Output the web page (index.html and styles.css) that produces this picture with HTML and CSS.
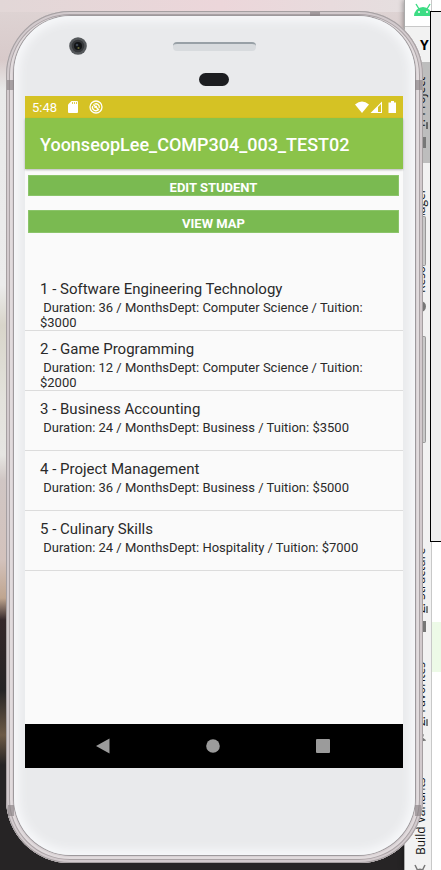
FILE: index.html
```html
<!DOCTYPE html>
<html lang="en">
<head>
<meta charset="utf-8">
<meta name="viewport" content="width=device-width, initial-scale=1">
<title>YoonseopLee_COMP304_003_TEST02</title>
<link rel="stylesheet" href="styles.css">
</head>
<body>
<aside class="ide">
  <div class="ide-logo">
    <svg width="20" height="13" viewBox="0 0 20 13"><path d="M1 13a9 9 0 0 1 18 0z" fill="#3ddc84"/><path d="M3 1l3 5M17 1l-3 5" stroke="#3ddc84" stroke-width="1.4"/><circle cx="6" cy="9" r="1" fill="#fff"/><circle cx="14" cy="9" r="1" fill="#fff"/></svg>
  </div>
  <div class="ide-crumb">Y</div>
  <div class="tab tab-active"><i class="tab-icon"></i><span><u>1</u>: Project</span></div>
  <div class="tab tab-resource"><i class="tab-icon tab-dot"></i><span>Resource Manager</span></div>
  <div class="tab tab-structure"><i class="tab-icon"></i><span><u>Z</u>: Structure</span></div>
  <div class="tab tab-favorites"><i class="tab-icon tab-star"></i><span><u>2</u>: Favorites</span></div>
  <div class="tab tab-build"><svg width="14" height="12" viewBox="0 0 14 12"><g transform="rotate(180 7 6)"><path d="M1 12a6 6.500 0 0 1 12 0z" fill="#777"/><path d="M2 2l2.500 5M12 2L9.500 7" stroke="#777" stroke-width="1.500"/></g></svg><span>Build Variants</span></div>
</aside>
<div class="editor"><div class="editor-line"></div></div>
<div class="dialog"></div>

<main class="phone">
  <i class="seam seam-top"></i><i class="seam seam-tl"></i><i class="seam seam-tr"></i><i class="seam seam-bl"></i><i class="seam seam-br"></i>
  <i class="side-key power"></i><i class="side-key volume"></i>
  <div class="face">
    <div class="forehead">
      <svg class="camera" width="18" height="18" viewBox="0 0 18 18"><circle cx="9" cy="9" r="8.8" fill="#55585b"/><circle cx="9" cy="9" r="6.3" fill="#35373a"/><circle cx="9" cy="9" r="4" fill="#111315"/><circle cx="8" cy="8" r="1.3" fill="#3c4450"/><circle cx="9.5" cy="11" r="1.1" fill="#686737"/></svg>
      <div class="speaker"></div>
      <div class="sensor"></div>
    </div>
    <section class="screen">
      <div class="status">
        <span>5:48</span>
        <svg width="10" height="12" viewBox="0 0 10 12"><path d="M3.500 0H9a1 1 0 0 1 1 1v10a1 1 0 0 1-1 1H1a1 1 0 0 1-1-1V3.500z" fill="#fff"/><path d="M4.500 1v2M6.500 1v2M8.500 1v2" stroke="#d5c224" stroke-width=".8"/></svg>
        <svg width="14" height="14" viewBox="0 0 14 14" fill="none" stroke="#fff"><circle cx="7" cy="7" r="6" stroke-width="1.300"/><path d="M4.300 4.500L10 10M9 9.700A3.300 3.300 0 0 1 3.700 6M5.500 4.200A3.300 3.300 0 0 1 10.200 8M5.800 7.800Q6 6.200 8 6.500" stroke-width="1.300"/></svg>
        <svg class="signals" width="42" height="13" viewBox="0 0 42 13"><path d="M0 3.500Q7-2.500 14 3.500L7 12z" fill="#fff"/><path d="M27 .5V12H15.500z" fill="#fff"/><path d="M23 6v5h3V3z" fill="#d5c224"/><path d="M34 1.500h2V0h3v1.500h2V12h-7.500V1.500z" fill="#fff"/></svg>
      </div>
      <header class="appbar"><h1>YoonseopLee_COMP304_003_TEST02</h1></header>
      <div class="actions">
        <button type="button">EDIT STUDENT</button>
        <button type="button">VIEW MAP</button>
      </div>
      <ul class="programs">
        <li><h2>1 - Software Engineering Technology</h2><p> Duration: 36 / MonthsDept: Computer Science / Tuition: $3000</p></li>
        <li><h2>2 - Game Programming</h2><p> Duration: 12 / MonthsDept: Computer Science / Tuition: $2000</p></li>
        <li><h2>3 - Business Accounting</h2><p> Duration: 24 / MonthsDept: Business / Tuition: $3500</p></li>
        <li><h2>4 - Project Management</h2><p> Duration: 36 / MonthsDept: Business / Tuition: $5000</p></li>
        <li><h2>5 - Culinary Skills</h2><p> Duration: 24 / MonthsDept: Hospitality / Tuition: $7000</p></li>
      </ul>
      <nav class="navbar">
        <button type="button" aria-label="Back"><svg width="14" height="16" viewBox="0 0 14 16"><path d="M0 8L13.500 .5v15z"/></svg></button>
        <button type="button" aria-label="Home"><svg width="14" height="14" viewBox="0 0 14 14"><circle cx="7" cy="7" r="6.800"/></svg></button>
        <button type="button" aria-label="Recent apps"><svg width="14" height="14" viewBox="0 0 14 14"><rect width="14" height="14" rx="1"/></svg></button>
      </nav>
    </section>
  </div>
</main>
</body>
</html>
```
FILE: styles.css
```css
* { box-sizing: border-box; }
html { height: 100%; }
body {
  margin: 0;
  min-height: 100%;
  display: flex;
  position: relative;
  overflow: hidden;
  font-family: Roboto, "Liberation Sans", sans-serif;
  background:
    linear-gradient(90deg, #e2d7d7, #ecd6da 50%, #e4e0e0) top / 100% 12px no-repeat,
    linear-gradient(#dfd5d5 0, #d8caca 60px, #e9e9e9 90px, #ececec 285px, #d8d5ca 325px, #e3e2dc 400px, #e6e5e2 455px, #d0c6c4 480px, #d3c2bc 560px, #bfa58f 598px, #35282b 620px, #262425 690px, #6c5946 735px, #262425 765px, #262425 100%);
}
h1, h2, p, ul { margin: 0; padding: 0; }
button { border: 0; padding: 0; font-family: inherit; }

/* Windows behind the phone */
.ide {
  position: absolute;
  top: 0;
  bottom: 0;
  right: 9px;
  width: 28px;
  display: flex;
  flex-direction: column;
  background: #f2f2f2;
  border-left: 1px solid #aaa;
  border-right: 1px solid #c8c8c8;
  box-shadow: -1px 0 5px #0005;
}
.ide-logo {
  flex: none;
  height: 27px;
  padding: 3px 0 0 8px;
  background: #fff;
  border-bottom: 1px solid #c8c8c8;
}
.ide-logo svg { display: block; }
.ide-crumb {
  flex: none;
  height: 35px;
  padding-left: 15px;
  font: bold 14px/35px "Open Sans", sans-serif;
}
.tab {
  flex: none;
  display: flex;
  align-items: center;
  gap: 8px;
  padding: 15px 5px 0 0;
  writing-mode: vertical-rl;
  transform: rotate(180deg);
  white-space: nowrap;
  font: 12px/16px "Open Sans", sans-serif;
  color: #111;
}
.tab-active { height: 101px; background: #bdbdbd; }
.tab-resource { height: 164px; }
.tab-structure { height: 120px; margin-top: 200px; }
.tab-favorites { height: 113px; }
.tab-build { height: 115px; padding-top: 0; }
.tab-icon { width: 12px; height: 11px; background: #777; }
.tab-dot { border-radius: 6px; }
.tab-star { clip-path: polygon(50% 0, 65% 35%, 100% 40%, 70% 65%, 80% 100%, 50% 80%, 20% 100%, 30% 65%, 0 40%, 35% 35%); }
.editor {
  position: absolute;
  top: 0;
  bottom: 0;
  right: 0;
  width: 9px;
  background: #fff;
}
.editor-line { height: 50px; margin-top: 622px; background: #edfae7; }
.dialog {
  position: absolute;
  top: 11px;
  right: 0;
  width: 11px;
  height: 531px;
  background: #efefef;
  border: 1px solid #000;
  border-right: 0;
}

/* Handset */
.phone {
  position: relative;
  flex: 1;
  display: flex;
  margin: 11px 18px 7px 6px;
  padding: 5px 8px 8px;
  border-radius: 64px;
  background: #d9d1d4;
  box-shadow:
    inset 0 0 0 1px #a59fa1,
    inset 0 0 0 3px #d2cacd,
    inset 0 0 0 4px #aaa2a5,
    inset 0 0 0 6px #e1dbdd;
}
.face {
  flex: 1;
  min-width: 0;
  display: flex;
  flex-direction: column;
  padding: 0 12px 87px 11px;
  border-radius: 57px;
  background: #e9eaec;
  box-shadow: 0 0 0 1px #9d999c, inset 0 0 10px 5px #f7f8fa;
}
.forehead {
  position: relative;
  flex: none;
  height: 80px;
  display: flex;
  flex-direction: column;
  align-items: center;
  gap: 22px;
  padding-top: 26px;
}
.camera { position: absolute; top: 21px; left: 44px; }
.speaker {
  width: 83px;
  height: 9px;
  border-radius: 4px;
  border-top: 2px solid #98a0a6;
  background: #d8dbde;
}
.sensor { width: 30px; height: 13px; border-radius: 7px; background: #1c1d20; }
.seam { position: absolute; background: #8a8285aa; }
.seam-top { top: 1px; right: 103px; width: 10px; height: 4px; }
.seam-tl, .seam-tr { top: 69px; width: 7px; height: 10px; }
.seam-bl, .seam-br { bottom: 47px; width: 6px; height: 11px; }
.seam-tl { left: 1px; }
.seam-tr { right: 1px; }
.seam-bl { left: 2px; }
.seam-br { right: 2px; }
.side-key {
  position: absolute;
  right: -3px;
  width: 3px;
  border-radius: 0 2px 2px 0;
  background: #c9c9c9;
  border: 1px solid #999;
  border-left: 0;
}
.power { top: 205px; height: 50px; }
.volume { top: 325px; height: 107px; }

/* Screen */
.screen {
  flex: 1;
  display: flex;
  flex-direction: column;
  background: #fafafa;
}
.status {
  flex: none;
  height: 22px;
  display: flex;
  align-items: center;
  gap: 11px;
  padding: 0 6px 0 7px;
  background: #d5c224;
  color: #fff;
  font-size: 13px;
}
.signals { margin-left: auto; }
.appbar {
  flex: none;
  height: 51px;
  padding-left: 15px;
  background: #8bc34a;
  color: #fff;
  box-shadow: 0 1px 2px #0004;
}
h1 { font-size: 18px; line-height: 53px; font-weight: 500; }
.actions {
  display: flex;
  flex-direction: column;
  gap: 14px;
  padding: 6px 4px 38px 3px;
}
.actions button {
  height: 21px;
  padding-top: 4px;
  border-radius: 1px;
  background: #7aba51;
  box-shadow: inset 0 0 0 1px #8bc46a;
  color: #fff;
  font-size: 13px;
  line-height: 18px;
  font-weight: 700;
}
.actions button + button { height: 23px; }
.programs { flex: 1; list-style: none; color: #2a2a2a; }
.programs li {
  min-height: 60px;
  padding: 8px 15px 0;
  border-bottom: 1px solid #dcdcdc;
}
h2 { font-size: 15px; line-height: 21px; font-weight: 400; }
.programs p { font-size: 13px; line-height: 15px; white-space: pre-wrap; }
.navbar {
  flex: none;
  height: 44px;
  display: flex;
  justify-content: space-between;
  padding: 0 56px 0 54px;
  background: #000;
}
.navbar button {
  width: 48px;
  display: grid;
  place-items: center;
  background: none;
}
.navbar svg { fill: #9b9b9b; }
```
